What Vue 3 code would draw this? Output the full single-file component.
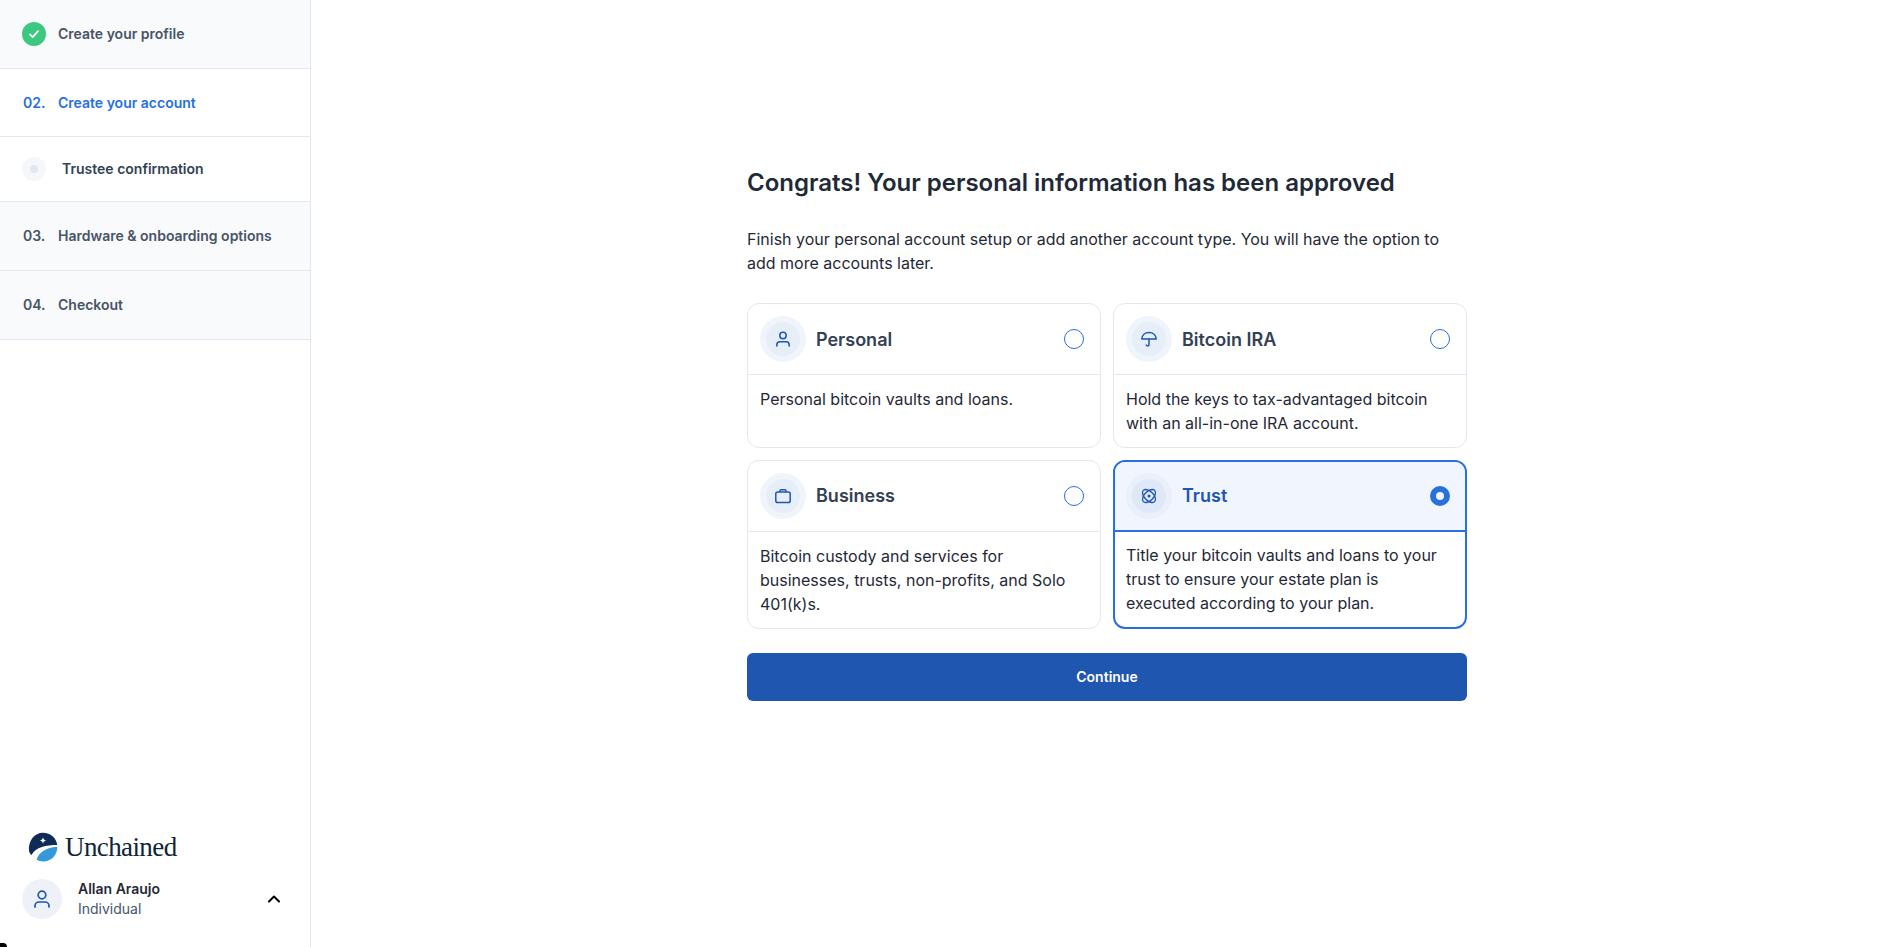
<script setup>
const steps = [
  { id: 1, kind: 'done', label: 'Create your profile' },
  { id: 2, kind: 'active', num: '02.', label: 'Create your account' },
  { id: 3, kind: 'sub', label: 'Trustee confirmation' },
  { id: 4, kind: 'todo', num: '03.', label: 'Hardware & onboarding options' },
  { id: 5, kind: 'todo', num: '04.', label: 'Checkout' }
]

const accounts = [
  { id: 'personal', name: 'Personal', icon: 'user', text: 'Personal bitcoin vaults and loans.' },
  { id: 'ira', name: 'Bitcoin IRA', icon: 'umbrella', text: 'Hold the keys to tax-advantaged bitcoin with an all-in-one IRA account.' },
  { id: 'business', name: 'Business', icon: 'briefcase', text: 'Bitcoin custody and services for businesses, trusts, non-profits, and Solo 401(k)s.' },
  { id: 'trust', name: 'Trust', icon: 'atom', text: 'Title your bitcoin vaults and loans to your trust to ensure your estate plan is executed according to your plan.', selected: true }
]
</script>

<template>
  <div class="page">
    <aside class="sidebar">
      <div
        v-for="step in steps"
        :key="step.id"
        class="step"
        :class="'step-' + step.kind"
      >
        <span v-if="step.kind === 'done'" class="check">
          <svg width="14" height="14" viewBox="0 0 14 14" fill="none">
            <path d="M3 7.4l2.7 2.7L11 4.2" stroke="#fff" stroke-width="1.8" stroke-linecap="round" stroke-linejoin="round" />
          </svg>
        </span>
        <span v-else-if="step.kind === 'sub'" class="dot"><i></i></span>
        <span v-else class="num">{{ step.num }}</span>
        <span class="label">{{ step.label }}</span>
      </div>

      <div class="foot">
        <div class="logo">
          <svg width="30" height="30" viewBox="0 0 30 30">
            <path d="M1 19C0 9 6.500 .8 15 .8c7.500 0 13.500 5.400 14.200 12.200C18 13 8 15 3.500 23 2.200 22 1.400 20.500 1 19z" fill="#0f2c56" />
            <path d="M29.300 14.800C29.500 23 23 29.500 15.500 29.500c-3 0-5.500-.8-7-2C11 20.500 18 15.300 29.300 14.800z" fill="#3498db" />
            <path d="M15 5.500l.9 2.100 2.100.9-2.100.9-.9 2.100-.9-2.100-2.100-.9 2.100-.9z" fill="#fff" />
          </svg>
          <span class="wordmark">Unchained</span>
        </div>
        <div class="user">
          <span class="avatar">
            <svg width="24" height="24" viewBox="0 0 24 24" fill="none" stroke="#1e56b0" stroke-width="1.700" stroke-linecap="round">
              <circle cx="12" cy="8" r="3.800" />
              <path d="M5 20v-1c0-2.500 2-4 4-4h6c2 0 4 1.500 4 4v1" />
            </svg>
          </span>
          <div class="user-text">
            <div class="user-name">Allan Araujo</div>
            <div class="user-type">Individual</div>
          </div>
          <svg class="chevron" width="14" height="10" viewBox="0 0 14 10" fill="none">
            <path d="M2 7.500l5-5 5 5" stroke="#000" stroke-width="2" stroke-linecap="round" stroke-linejoin="round" />
          </svg>
        </div>
      </div>
    </aside>

    <main class="main">
      <div class="content">
        <h1>Congrats! Your personal information has been approved</h1>
        <p class="intro">
          Finish your personal account setup or add another account type. You will have the option to add more accounts later.
        </p>
        <div class="cards">
          <div
            v-for="acc in accounts"
            :key="acc.id"
            class="card"
            :class="{ selected: acc.selected }"
          >
            <div class="card-head">
              <span class="ring">
                <span class="ring-inner">
                  <svg v-if="acc.icon === 'user'" width="20" height="20" viewBox="0 0 20 20" fill="none" stroke="#1e56b0" stroke-width="1.500" stroke-linecap="round">
                    <circle cx="10" cy="6.500" r="3.200" />
                    <path d="M3.800 17v-1c0-2 1.500-3.200 3.200-3.200h6c1.700 0 3.200 1.200 3.200 3.200v1" />
                  </svg>
                  <svg v-else-if="acc.icon === 'umbrella'" width="20" height="20" viewBox="0 0 20 20" fill="none" stroke="#1e56b0" stroke-width="1.500" stroke-linecap="round" stroke-linejoin="round">
                    <path d="M2.800 10C3 6 6 3.500 10 3.500s7 2.500 7.200 6.500z" />
                    <path d="M10 10v5.500c0 1-.7 1.500-1.400 1.500-.6 0-1.100-.3-1.300-.9" />
                  </svg>
                  <svg v-else-if="acc.icon === 'briefcase'" width="20" height="20" viewBox="0 0 20 20" fill="none" stroke="#1e56b0" stroke-width="1.500" stroke-linejoin="round">
                    <rect x="2.800" y="6" width="14.400" height="10.500" rx="1.800" />
                    <path d="M7 6V4.800c0-.6.400-1 1-1h4c.6 0 1 .4 1 1V6" />
                  </svg>
                  <svg v-else width="20" height="20" viewBox="0 0 20 20" fill="none" stroke="#1e56b0" stroke-width="1.300">
                    <ellipse cx="10" cy="10" rx="8" ry="4.500" transform="rotate(45 10 10)" />
                    <ellipse cx="10" cy="10" rx="8" ry="4.500" transform="rotate(-45 10 10)" />
                    <circle cx="10" cy="10" r="1.500" fill="#1e56b0" stroke="none" />
                  </svg>
                </span>
              </span>
              <span class="card-name">{{ acc.name }}</span>
              <span class="radio"></span>
            </div>
            <div class="card-body">{{ acc.text }}</div>
          </div>
        </div>
        <button class="continue">Continue</button>
      </div>
    </main>
    <div class="corner"></div>
  </div>
</template>

<style scoped>
.page {
  display: flex;
  height: 947px;
  overflow: hidden;
  position: relative;
  background: #fff;
  font-family: Inter, "Liberation Sans", sans-serif;
  color: #1f2937;
}
.sidebar {
  width: 311px;
  flex-shrink: 0;
  box-sizing: border-box;
  border-right: 1px solid #e2e8f0;
  display: flex;
  flex-direction: column;
}
.step {
  display: flex;
  align-items: center;
  box-sizing: border-box;
  border-bottom: 1px solid #e4e8f0;
  padding-left: 22px;
  padding-bottom: 1px;
  font-size: 14px;
  font-weight: 600;
  color: #475467;
  height: 69px;
}
.step-done {
  background: #f9fafb;
}
.step-active {
  height: 68px;
  padding-bottom: 0;
  color: #2670e0;
}
.step-sub {
  height: 65px;
  color: #344054;
}
.step-todo {
  background: #f9fafb;
}
.check {
  width: 24px;
  height: 24px;
  border-radius: 50%;
  background: #3cc97f;
  display: flex;
  align-items: center;
  justify-content: center;
  margin-right: 12px;
}
.dot {
  width: 24px;
  height: 24px;
  border-radius: 50%;
  background: #f5f7fa;
  display: flex;
  align-items: center;
  justify-content: center;
  margin-right: 16px;
}
.dot i {
  width: 8px;
  height: 8px;
  border-radius: 50%;
  background: #e2e7f0;
}
.num {
  width: 36px;
  margin-left: 1px;
  margin-right: -1px;
}
.foot {
  margin-top: auto;
  padding: 0 22px 28px;
}
.logo {
  display: flex;
  align-items: center;
  padding-left: 6px;
  margin-bottom: 17px;
}
.wordmark {
  font-family: "Liberation Serif", serif;
  font-size: 27px;
  line-height: 30px;
  letter-spacing: -0.6px;
  color: #10243a;
  margin-left: 7px;
}
.user {
  display: flex;
  align-items: center;
}
.avatar {
  width: 40px;
  height: 40px;
  border-radius: 50%;
  background: #eef2f8;
  display: flex;
  align-items: center;
  justify-content: center;
  margin-right: 16px;
}
.user-text {
  flex: 1;
  font-size: 14px;
  line-height: 20px;
}
.user-name {
  font-weight: 600;
}
.user-type {
  color: #475467;
}
.chevron {
  margin-right: 7px;
}
.main {
  flex: 1;
  display: flex;
  justify-content: center;
  padding-top: 167px;
}
.content {
  width: 720px;
}
h1 {
  margin: 0;
  font-size: 24px;
  line-height: 32px;
  font-weight: 600;
  letter-spacing: -0.01px;
  color: #1f2937;
}
.intro {
  margin: 28px 0 0;
  font-size: 16px;
  line-height: 24px;
  color: #1f2937;
}
.cards {
  margin-top: 28px;
  display: grid;
  grid-template-columns: 1fr 1fr;
  column-gap: 12px;
  row-gap: 11.6px;
}
.card {
  border: 1px solid #e2e8f0;
  border-radius: 12px;
  overflow: hidden;
  display: flex;
  flex-direction: column;
}
.card-head {
  display: flex;
  align-items: center;
  height: 70px;
  flex-shrink: 0;
  padding: 0 12px;
  border-bottom: 1px solid #e2e8f0;
}
.ring {
  width: 46px;
  height: 46px;
  border-radius: 50%;
  background: #f0f4fb;
  display: flex;
  align-items: center;
  justify-content: center;
  margin-right: 10px;
}
.ring-inner {
  width: 34px;
  height: 34px;
  border-radius: 50%;
  background: #e6eefa;
  display: flex;
  align-items: center;
  justify-content: center;
}
.card-name {
  flex: 1;
  font-size: 18px;
  font-weight: 600;
  color: #344054;
}
.radio {
  width: 20px;
  height: 20px;
  box-sizing: border-box;
  border: 1px solid #2670e0;
  border-radius: 50%;
  margin-right: 4px;
}
.card-body {
  padding: 12px 24px 12px 12px;
  font-size: 16px;
  line-height: 24px;
  color: #1f2937;
}
.card.selected {
  border: 2px solid #2670e0;
}
.selected .card-head {
  height: 68px;
  padding: 0 11px;
  background: #f1f5fd;
  border-bottom: 2px solid #2670e0;
}
.selected .ring {
  background: #e9f0fa;
}
.selected .ring-inner {
  background: #dee8f7;
}
.selected .card-name {
  color: #1e56b0;
}
.selected .radio {
  border: 6px solid #2670e0;
}
.selected .card-body {
  padding: 11px 24px 11px 11px;
}
.continue {
  display: block;
  width: 100%;
  height: 48px;
  margin-top: 24.4px;
  border: none;
  border-radius: 6px;
  background: #1e56b0;
  color: #fff;
  font: 600 14px Inter, sans-serif;
}
.corner {
  position: absolute;
  left: 0;
  bottom: 0;
  width: 7px;
  height: 4px;
  background: #000;
  border-top-right-radius: 7px;
}
</style>
